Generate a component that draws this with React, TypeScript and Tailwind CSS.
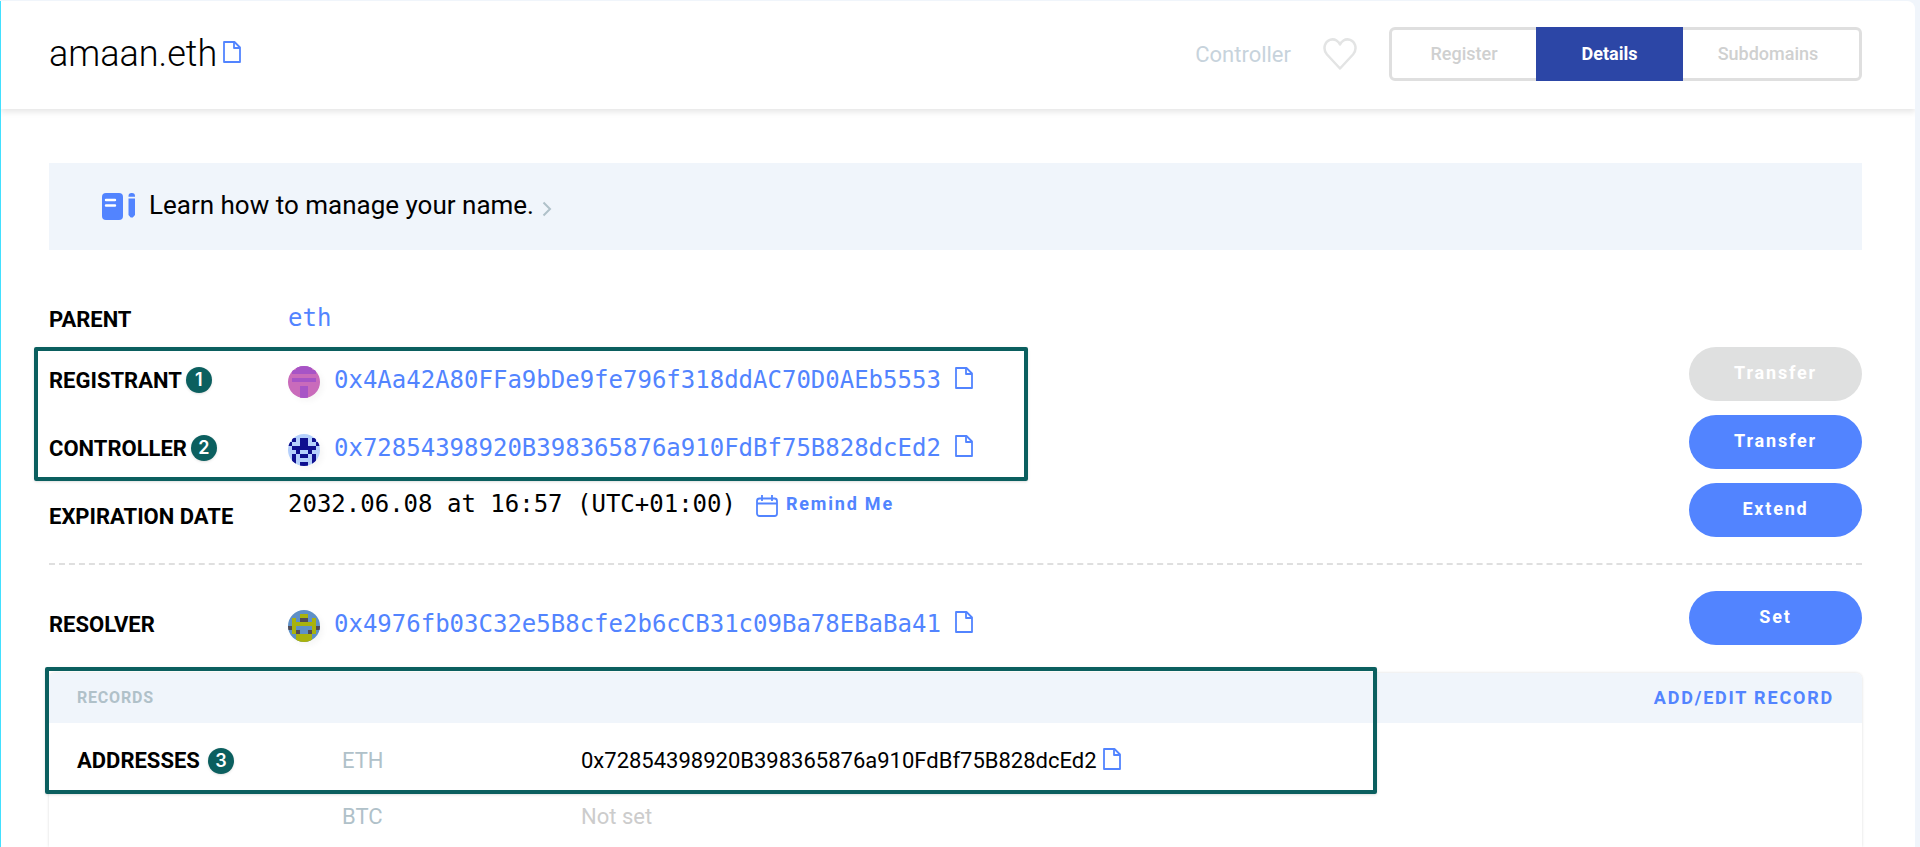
import React from 'react';

const OWNER = '0x72854398920B398365876a910FdBf75B828dcEd2';

// '.' is the background, 'a' the main colour and 'b' the spot colour
const identicons = {
  pink: {
    bg: '#c96bbb',
    a: '#a754c6',
    b: '#a754c6',
    rows: ['..aaaa..', '.aaaaaa.', '........', '.aaaaaa.', '........', '...aa...', '...aa...', '...aa...'],
  },
  navy: {
    bg: '#b5d0fc',
    a: '#0f108f',
    b: '#0f108f',
    rows: ['........', '.a.aa.a.', 'a..aa..a', '.aaaaaa.', '..a..a..', '.a.aa.a.', '.a....a.', '.a.aa.a.'],
  },
  olive: {
    bg: '#5f90c6',
    a: '#a9b20c',
    b: '#514b55',
    rows: ['........', '...aa...', '.a.bb.a.', '.aaaaaa.', 'ba....ab', '.ab..ba.', '..aaaa..', '..aaaa..'],
  },
};

const Identicon: React.FC<{ name: keyof typeof identicons }> = ({ name }) => {
  const icon = identicons[name];
  return (
    <span className="mt-1 w-8 h-8 rounded-full overflow-hidden shrink-0 shadow-[3px_3px_6px_#0000000a]">
      <svg viewBox="0 0 8 8" className="w-8 h-8" shapeRendering="crispEdges" aria-hidden="true">
        <rect width="8" height="8" fill={icon.bg} />
        {icon.rows.map((row, y) =>
          row.split('').map((cell, x) =>
            cell === '.' ? null : (
              <rect key={`${x}-${y}`} x={x} y={y} width="1" height="1" fill={cell === 'a' ? icon.a : icon.b} />
            )
          )
        )}
      </svg>
    </span>
  );
};

const CopyButton: React.FC = () => (
  <button type="button" aria-label="Copy" className="shrink-0 mb-1 text-[#5284ff] cursor-pointer">
    <svg width="18" height="22" viewBox="0 0 18 22" fill="none" stroke="currentColor" strokeWidth="1.8" strokeLinejoin="round">
      <path d="M1 1h10.500L17 6.500V21H1z" />
      <path d="M11 1v6h6" />
    </svg>
  </button>
);

const Marker: React.FC<{ n: number }> = ({ n }) => (
  <span className="w-[26px] h-[26px] rounded-full bg-[#0b5f5f] text-white text-lg leading-[26px] font-semibold text-center font-[Inter,sans-serif] shadow-sm">
    {n}
  </span>
);

const Highlight: React.FC<{ className: string }> = ({ className }) => (
  <div className={`absolute border-4 border-[#0b5f5f] rounded-xs shadow-sm pointer-events-none ${className}`}></div>
);

const ActionButton: React.FC<{ label: string; disabled?: boolean }> = ({ label, disabled }) => (
  <button
    type="button"
    disabled={disabled}
    className={`w-[173px] h-[54px] pb-0.5 rounded-full text-white text-lg font-bold tracking-widest ${
      disabled ? 'bg-[#dfe0e0]' : 'bg-[#5284ff] hover:bg-[#2c46a6] cursor-pointer'
    }`}
  >
    {label}
  </button>
);

const Row: React.FC<{ label: string; marker?: number; action?: React.ReactNode; children: React.ReactNode }> = ({
  label,
  marker,
  action,
  children,
}) => (
  <div className="flex items-start h-[68px]">
    <div className="w-[239px] h-[66px] flex items-center gap-1 text-[22px] font-bold">
      {label}
      {marker && <Marker n={marker} />}
    </div>
    <div className="flex-1 flex items-start">{children}</div>
    {action}
  </div>
);

const Address: React.FC<{ icon: keyof typeof identicons; value: string }> = ({ icon, value }) => (
  <div className="flex items-center h-[66px]">
    <Identicon name={icon} />
    <a href="#address" className="ml-3.5 mr-1 min-w-[617px] text-2xl text-[#5284ff] font-['DejaVu_Sans_Mono',monospace]">
      {value}
    </a>
    <CopyButton />
  </div>
);

const App: React.FC = () => {
  return (
    <div className="min-h-screen flex flex-col bg-[#f0f5fb] pt-px pr-[5px] text-black font-[Roboto,sans-serif]">
      <div className="flex-1 flex flex-col bg-white border-l border-[#42e0ff] rounded-tr-lg overflow-hidden">
        {/* Header */}
        <header className="flex items-center h-[108px] pl-12 pr-[53px] pb-0.5 shadow-[0_3px_6px_#0000001a]">
          <h1 className="text-4xl font-light">amaan.eth</h1>
          <div className="ml-1.5 flex">
            <CopyButton />
          </div>
          <div className="ml-auto flex items-center">
            <span className="text-[22px] text-[#c7d3dc]">Controller</span>
            <button type="button" aria-label="Add to favourites" className="ml-8 mr-8 cursor-pointer">
              <svg width="34" height="32" viewBox="0 0 34 32" fill="none" stroke="#e3e4e4" strokeWidth="2.5" strokeLinejoin="round">
                <path d="M17 30.5 L4 16.5 C1.500 13.500 1 10 2 7 C3.500 2 9.500 0 13.500 2.500 C15 3.500 16.300 5 17 6.500 C17.700 5 19 3.500 20.500 2.500 C24.500 0 30.500 2 32 7 C33 10 32.500 13.500 30 16.500 Z" />
              </svg>
            </button>
            <nav className="flex h-[54px] border-3 border-[#dfdfdf] rounded-md text-lg font-medium text-[#cfd0d0]">
              <a href="#register" className="w-36 flex items-center justify-center">Register</a>
              <a href="#details" className="w-[147px] -my-[3px] flex items-center justify-center bg-[#2c46a6] text-white font-bold">Details</a>
              <a href="#subdomains" className="w-44 pr-1.5 flex items-center justify-center">Subdomains</a>
            </nav>
          </div>
        </header>

        <main className="flex-1 flex flex-col pl-12 pr-[53px] pt-[54px]">
          <a href="#learn" className="flex items-center h-[87px] pl-[53px] bg-[#f0f5fb] text-[26px]">
            <svg width="33" height="27" viewBox="0 0 33 27" aria-hidden="true">
              <rect width="21" height="27" rx="4" fill="#5284ff" />
              <path d="M4 7h9M4 12.500h9" stroke="#fff" strokeWidth="2.400" strokeLinecap="round" />
              <path d="M26.500 3.700V3a3 3 0 0 1 3-3h.5a3 3 0 0 1 3 3v.7zM26.500 5.500h6.500v16.500l-2.200 2.500h-2.100l-2.200-2.500z" fill="#5284ff" />
            </svg>
            <span className="ml-3.5 pb-0.5">Learn how to manage your name.</span>
            <svg className="ml-2 mt-1" width="10" height="16" viewBox="0 0 10 16" fill="none" stroke="#b0c1c9" strokeWidth="2" aria-hidden="true">
              <path d="M1.500 1.500L8 8l-6.500 6.500" />
            </svg>
          </a>

          <div className="pt-9">
            <Row label="PARENT">
              <a href="#eth" className="text-2xl leading-[64px] text-[#5284ff] font-['DejaVu_Sans_Mono',monospace]">eth</a>
            </Row>
            <div className="relative -mt-[7px]">
              <Row label="REGISTRANT" marker={1} action={<ActionButton label="Transfer" disabled />}>
                <Address icon="pink" value="0x4Aa42A80FFa9bDe9fe796f318ddAC70D0AEb5553" />
              </Row>
              <Row label="CONTROLLER" marker={2} action={<ActionButton label="Transfer" />}>
                <Address icon="navy" value={OWNER} />
              </Row>
              <Highlight className="top-0 bottom-0.5 -left-[15px] w-[994px]" />
            </div>
            <Row label="EXPIRATION DATE" action={<ActionButton label="Extend" />}>
              <div className="flex items-center h-[42px]">
                <span className="text-2xl font-['DejaVu_Sans_Mono',monospace]">2032.06.08 at 16:57 (UTC+01:00)</span>
                <button type="button" className="ml-5 flex items-center gap-2 text-lg font-bold tracking-widest text-[#5284ff] cursor-pointer">
                  <svg className="mt-1" width="22" height="22" viewBox="0 0 22 22" fill="none" stroke="currentColor" strokeWidth="1.800" aria-hidden="true">
                    <rect x="1" y="3.500" width="20" height="17.500" rx="2.500" />
                    <path d="M1 8.500h20M6 0v6M16 0v6" />
                  </svg>
                  Remind Me
                </button>
              </div>
            </Row>
          </div>

          <hr className="mt-3 mb-[26px] border-0 border-t-2 border-dashed border-[#dfdfdf]" />

          <Row label="RESOLVER" action={<ActionButton label="Set" />}>
            <Address icon="olive" value="0x4976fb03C32e5B8cfe2b6cCB31c09Ba78EBaBa41" />
          </Row>

          {/* Records */}
          <section className="relative flex-1 mt-3.5 rounded-t-md shadow-[0_0_3px_#00000026]">
            <div className="flex items-center justify-between h-[50px] px-7 rounded-t-md bg-[#f0f5fb] font-bold">
              <h2 className="text-base text-[#b0c1c9] tracking-wider">RECORDS</h2>
              <button type="button" className="text-lg tracking-widest text-[#5284ff] cursor-pointer">ADD/EDIT RECORD</button>
            </div>
            <div className="px-7 pt-2.5 text-[22px] leading-[56px]">
              <div className="flex items-center">
                <h3 className="w-[265px] flex items-center gap-2 font-bold">
                  ADDRESSES <Marker n={3} />
                </h3>
                <span className="w-[239px] text-[#b0c1c9]">ETH</span>
                <span className="mr-1.5">{OWNER}</span>
                <CopyButton />
              </div>
              <div className="flex items-center">
                <span className="w-[265px]"></span>
                <span className="w-[239px] text-[#b0c1c9]">BTC</span>
                <span className="text-[#cccccc]">Not set</span>
              </div>
            </div>
            <Highlight className="-top-[6px] -left-1 w-[1332px] h-[127px]" />
          </section>
        </main>
      </div>
    </div>
  );
};

export default App;
